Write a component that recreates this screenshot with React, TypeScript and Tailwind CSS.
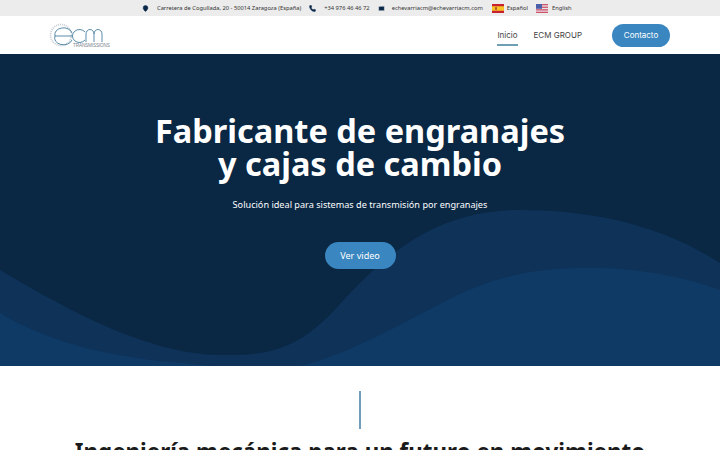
import React from 'react';
import { MapPin, Phone, Mail } from 'lucide-react';

const noto = { fontFamily: '"Noto Sans", sans-serif' };

function FlagES() {
  return (
    <svg width="12" height="9" viewBox="0 0 12 9" className="shrink-0">
      <rect width="12" height="9" fill="#c8202f" />
      <rect y="2.25" width="12" height="4.5" fill="#f6c324" />
      <rect x="3" y="3.2" width="2" height="2.6" fill="#b5532a" />
    </svg>
  );
}

function FlagUS() {
  return (
    <svg width="12" height="9" viewBox="0 0 12 9" className="shrink-0">
      <rect width="12" height="9" fill="#e9e3ea" />
      <rect width="12" height="1.3" fill="#d0546a" />
      <rect y="2.6" width="12" height="1.3" fill="#d0546a" />
      <rect y="5.2" width="12" height="1.3" fill="#d0546a" />
      <rect y="7.7" width="12" height="1.3" fill="#d0546a" />
      <rect width="6" height="4.8" fill="#4a5fa8" />
    </svg>
  );
}

function Logo() {
  return (
    <div className="relative w-[62px] h-[26px]">
      <svg width="62" height="26" viewBox="0 0 62 26" fill="none">
        <circle cx="12" cy="13" r="10.5" stroke="#c5ccd2" strokeWidth="1.8" strokeDasharray="1 1" />
        <path d="M23 11 A8.5 6.5 0 0 0 6 14 A8.5 6.5 0 0 0 23 18 M6 14 H23" stroke="#2f6f94" strokeWidth="0.8" />
        <path d="M36 10 A7 6.5 0 1 0 36 18" stroke="#2f6f94" strokeWidth="0.8" />
        <path d="M37 20 V12 A4 4.5 0 0 1 45 12 V20 M45 12 A4 4.5 0 0 1 53 12 V20" stroke="#2f6f94" strokeWidth="0.8" />
      </svg>
      <span className="absolute left-[24px] top-[21px] text-[4.6px] leading-[5px] tracking-[-0.1px] text-[#7a858e]" style={{ fontFamily: '"Liberation Sans", sans-serif' }}>
        TRANSMISSIONS
      </span>
    </div>
  );
}

export default function App() {
  return (
    <div className="w-[720px] h-[450px] overflow-hidden bg-white" style={noto}>
      {/* Top bar */}
      <div className="h-[16px] bg-[#ececec] flex items-center pl-[142px] text-[5.75px] text-[#333] whitespace-nowrap">
        <MapPin className="w-[7px] h-[7px] text-[#0b2a4a] fill-[#0b2a4a]" />
        <span className="ml-[8px]">Carretera de Cogullada, 20 - 50014 Zaragoza (España)</span>
        <Phone className="ml-[8px] w-[7px] h-[7px] text-[#0b2a4a] fill-[#0b2a4a]" />
        <span className="ml-[8px]">+34 976 46 46 72</span>
        <Mail className="ml-[8px] w-[7px] h-[7px] text-[#ececec] fill-[#0b2a4a]" />
        <span className="ml-[7px]">echevarriacm@echevarriacm.com</span>
        <span className="ml-[9px]"><FlagES /></span>
        <span className="ml-[3px]">Español</span>
        <span className="ml-[8px]"><FlagUS /></span>
        <span className="ml-[4px]">English</span>
      </div>

      {/* Nav */}
      <div className="h-[38px] flex items-center pl-[49px] pr-[50px]">
        <Logo />
        <div className="ml-auto flex items-center text-[#444] text-[8px]" style={{ fontFamily: 'Inter, sans-serif' }}>
          <div className="relative">
            Inicio
            <div className="absolute left-0 right-0 top-[15px] h-[2px] bg-[#6f9fb5]" />
          </div>
          <div className="ml-[16px]">ECM GROUP</div>
          <div className="ml-[30px] w-[58px] h-[23px] rounded-full bg-[#3a86c0] text-white flex items-center justify-center">Contacto</div>
        </div>
      </div>

      {/* Hero */}
      <div className="relative h-[312px] bg-[#0a2744] overflow-hidden">
        <svg className="absolute inset-0" width="720" height="312" viewBox="0 0 720 312">
          <path d="M0 216 C50 245 140 300 220 301 C270 302 300 295 340 250 C390 195 440 156 520 156 C590 156 660 170 720 209 V312 H0 Z" fill="#0e3258" />
          <path d="M0 259 C50 290 120 305 183 309 L210 312 L300 312 C350 300 400 270 450 245 C500 220 540 214 587 214 C640 214 680 222 720 236 V312 H0 Z" fill="#0f3a66" />
        </svg>
        <div className="relative flex flex-col items-center text-white">
          <h1 className="mt-[60px] text-[32.5px] leading-[33px] font-bold text-center">
            Fabricante de engranajes
            <br />
            y cajas de cambio
          </h1>
          <p className="mt-[17px] text-[9.15px] leading-[16px]">Solución ideal para sistemas de transmisión por engranajes</p>
          <div className="mt-[29px] w-[71px] h-[27px] rounded-full bg-[#3a86c0] flex items-center justify-center text-[9.1px]">Ver video</div>
        </div>
      </div>

      {/* Intro */}
      <div className="flex flex-col items-center">
        <div className="mt-[25px] w-[2px] h-[38px] bg-[#6f9dba]" />
        <h2 className="mt-[6px] text-[22.4px] leading-[34px] font-bold text-[#1a1a1a] whitespace-nowrap">
          Ingeniería mecánica para un futuro en movimiento
        </h2>
      </div>
    </div>
  );
}
